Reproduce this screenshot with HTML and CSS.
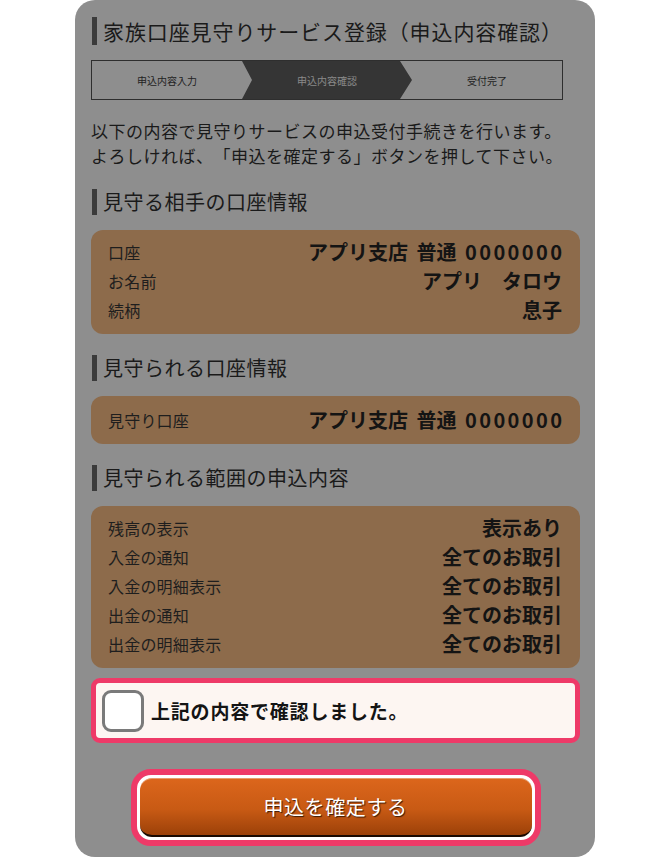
FILE: index.html
```html
<!DOCTYPE html>
<html lang="ja">
<head>
    <meta charset="UTF-8">
    <meta name="viewport" content="width=device-width, initial-scale=1.0">
    <title>家族口座見守りサービス登録</title>
    <link rel="stylesheet" href="styles.css">
</head>
<body>
    <div class="sheet">
        <h1 class="page-title">家族口座見守りサービス登録（申込内容確認）</h1>

        <div class="steps">
            <div class="step">申込内容入力</div>
            <div class="step current">申込内容確認</div>
            <div class="step">受付完了</div>
        </div>

        <p class="intro">以下の内容で見守りサービスの申込受付手続きを行います。<br>よろしければ、「申込を確定する」ボタンを押して下さい。</p>

        <h2 class="section-title">見守る相手の口座情報</h2>
        <div class="card">
            <div class="row"><span class="label">口座</span><span class="value">アプリ支店 普通 <span class="num">0000000</span></span></div>
            <div class="row"><span class="label">お名前</span><span class="value">アプリ　タロウ</span></div>
            <div class="row"><span class="label">続柄</span><span class="value">息子</span></div>
        </div>

        <h2 class="section-title">見守られる口座情報</h2>
        <div class="card single">
            <div class="row"><span class="label">見守り口座</span><span class="value">アプリ支店 普通 <span class="num">0000000</span></span></div>
        </div>

        <h2 class="section-title">見守られる範囲の申込内容</h2>
        <div class="card">
            <div class="row"><span class="label">残高の表示</span><span class="value">表示あり</span></div>
            <div class="row"><span class="label">入金の通知</span><span class="value">全てのお取引</span></div>
            <div class="row"><span class="label">入金の明細表示</span><span class="value">全てのお取引</span></div>
            <div class="row"><span class="label">出金の通知</span><span class="value">全てのお取引</span></div>
            <div class="row"><span class="label">出金の明細表示</span><span class="value">全てのお取引</span></div>
        </div>

        <label class="confirm">
            <span class="checkbox"></span>
            <span class="confirm-text">上記の内容で確認しました。</span>
        </label>

        <div class="submit-wrap">
            <button type="button" class="submit">申込を確定する</button>
        </div>
    </div>
</body>
</html>
```

FILE: styles.css
```css
body {
    margin: 0;
    background: #fff;
    font-family: "Noto Sans CJK JP", "Noto Sans", sans-serif;
    color: #1c1c1c;
    text-spacing-trim: space-all;
}
.sheet {
    width: 520px;
    margin-left: 75px;
    box-sizing: border-box;
    padding: 17px 15px 11px 16px;
    background: #8e8e8e;
    border-radius: 20px;
}
.page-title {
    margin: 0;
    margin-left: 1px;
    padding-left: 6px;
    border-left: 5px solid #3b3b3b;
    font-size: 21px;
    font-weight: normal;
    line-height: 28px;
    color: #1a1a1a;
    letter-spacing: 0.9px;
    white-space: nowrap;
}
.steps {
    display: flex;
    height: 38px;
    margin: 15px 17px 0 0;
    border: 1px solid #2e2e2e;
}
.step {
    display: flex;
    align-items: center;
    justify-content: center;
    font-size: 10px;
    color: #222;
}
.step:first-child {
    width: 150px;
}
.step.current {
    width: 170px;
    background: #353535;
    color: #8a8a8a;
    clip-path: polygon(0 0, 158px 0, 100% 50%, 158px 100%, 0 100%, 10px 50%);
}
.step:last-child {
    flex: 1;
}
.intro {
    margin: 18px 0 0;
    font-size: 17px;
    line-height: 25px;
    color: #1a1a1a;
    letter-spacing: 0.5px;
    white-space: nowrap;
}
.section-title {
    margin: 21px 0 0 1px;
    padding-left: 6px;
    border-left: 5px solid #3b3b3b;
    font-size: 20px;
    font-weight: normal;
    line-height: 26px;
    color: #1a1a1a;
    letter-spacing: 0.5px;
}
.card {
    margin-top: 15px;
    padding: 7px 18px 10px 17px;
    background: #8d6b4b;
    border-radius: 12px;
}
.card.single {
    padding-top: 9px;
    padding-bottom: 10px;
}
.row {
    display: flex;
    justify-content: space-between;
    align-items: center;
    height: 29px;
}
.label {
    font-size: 16px;
    color: #1e1e1e;
    letter-spacing: 0.2px;
}
.value {
    font-size: 20px;
    font-weight: bold;
    color: #141414;
    white-space: nowrap;
    word-spacing: 4px;
}
.num {
    letter-spacing: 2.4px;
    margin-right: -2.4px;
}
.confirm {
    display: flex;
    align-items: center;
    gap: 7px;
    margin-top: 10px;
    height: 65px;
    box-sizing: border-box;
    padding-left: 6px;
    background: #fdf6f2;
    border: 5px solid #ee3a68;
    border-radius: 9px;
}
.checkbox {
    width: 36px;
    height: 36px;
    border: 3px solid #7a7a7a;
    border-radius: 9px;
    background: #fff;
}
.confirm-text {
    font-size: 19px;
    font-weight: bold;
    color: #141414;
    letter-spacing: 0.8px;
}
.submit-wrap {
    width: 410px;
    margin: 26px auto 0;
    box-sizing: border-box;
    padding: 3px;
    background: #fff;
    border: 6px solid #ee3a68;
    border-radius: 20px;
}
.submit {
    display: block;
    width: 100%;
    height: 59px;
    border: none;
    border-bottom: 2px solid #1a0a02;
    border-radius: 12px;
    background: linear-gradient(#dc661c, #c85a14 55%, #9c4109);
    box-shadow: inset 0 1px 0 rgba(255, 255, 255, 0.35);
    font-family: "Noto Sans CJK JP", sans-serif;
    font-size: 20px;
    letter-spacing: 0.6px;
    color: #fff;
    text-shadow: 1px 1px 1px #3a1a05;
    cursor: pointer;
}
```
